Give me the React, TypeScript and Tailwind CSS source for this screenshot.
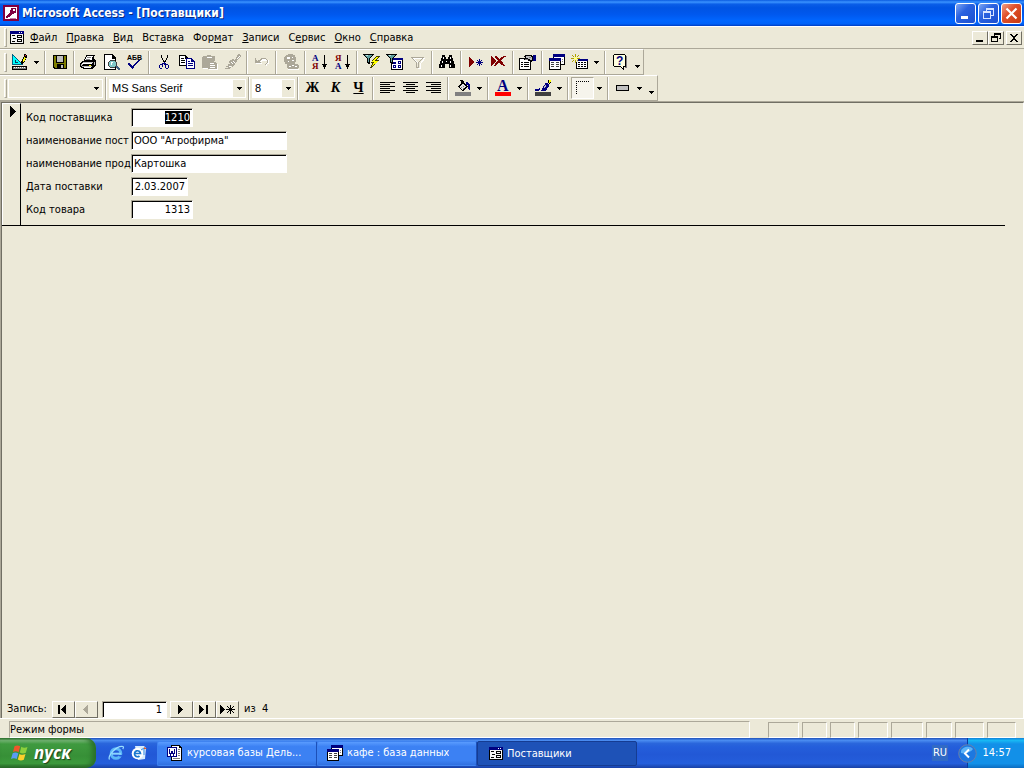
import type { FocusEvent, ReactNode } from "react";

/* ---------- icons ---------- */

function Icon({ children, w = 16, h = 16 }: { children: ReactNode; w?: number; h?: number }) {
  return (
    <svg width={w} height={h} viewBox={`0 0 ${w} ${h}`} shapeRendering="crispEdges" className="shrink-0 overflow-visible" aria-hidden="true">
      {children}
    </svg>
  );
}

const Down = () => (
  <Icon w={5} h={3}>
    <path d="M0 0h5v1H0zM1 1h3v1H1zM2 2h1v1H2z" />
  </Icon>
);

const AccessLogo = () => (
  <Icon>
    <path fill="#800040" d="M0 0h16v16H0z" />
    <path fill="#fff" d="M2 2h12v12H2z" />
    <path fill="#800040" d="M8 3h5v5h-2v1H9v1H8v1H7v1H5v1H3v-2h1v-1h1V9h1V8h1V5h1z" />
    <path fill="#fff" d="M10 4h2v2h-2z" />
    <path fill="#c080a0" d="M7 13h6v1H7z" />
  </Icon>
);

const FormIcon = () => (
  <Icon w={14} h={13}>
    <path d="M0 0h14v13H0z" />
    <path fill="#f4f4f4" d="M1 3h12v9H1z" />
    <path fill="#000080" d="M0 0h14v3H0z" />
    <path fill="#fff" d="M9 1h1v1H9zM11 1h1v1h-1z" />
    <path d="M2 4h3v1H2zM3 7h3v1H3zM2 10h3v1H2z" />
    <path fillRule="evenodd" d="M7 4h5v3H7zM8 5v1h3V5zM7 8h5v3H7zM8 9v1h3V9z" />
  </Icon>
);

const DesignIcon = () => (
  <Icon>
    <path fill="#00ffff" d="M1 1l10 10H1z" />
    <path d="M0 0h1v11H0zM1 1h1v1H1zM2 2h1v1H2zM3 3h1v1H3zM4 4h1v1H4zM5 5h1v1H5zM6 6h1v1H6zM7 7h1v1H7zM8 8h1v1H8zM9 9h1v1H9zM10 10h1v1h-1z" fill="#006080" />
    <path d="M3 6h1v2H3zM3 8h3v1H3z" fill="#004060" />
    <path d="M0 10h11v1H0z" fill="#006080" />
    <path d="M0 12h15v4H0z" />
    <path fill="#808080" d="M1 13h13v2H1z" />
    <path fill="#fff" d="M2 13h1v1H2zM4 13h1v1H4zM6 13h1v1H6zM8 13h1v1H8zM10 13h1v1h-1zM12 13h1v1h-1z" />
    <path d="M12 0h2v1h1v3h-1v2h-1v2h-1v1h-1v1H9V7h1V5h1V3h1z" />
    <path fill="#ffff00" d="M12 3h1v1h1v1h-1v2h-1v1h-1V5h1z" />
    <path fill="#ff4040" d="M13 1h1v1h-1z" />
  </Icon>
);

const SaveIcon = () => (
  <Icon>
    <path d="M1 1h14v14H2v-1H1z" />
    <path fill="#808000" d="M2 2h2v7h8V2h2v12H3v-1H2z" />
    <path fill="#c0c0c0" d="M5 2h6v6H5z" />
    <path d="M5 10h7v4H5z" />
    <path fill="#c0c0c0" d="M9 11h2v3H9z" />
  </Icon>
);

const PrintIcon = () => (
  <Icon w={17} h={16}>
    <path d="M6 1h9v1h-1v3h1v1h1v6h-1v1h-1v1h-1v1H3v-1H1v-1H0V9h1V8h1V7h2V5h1V3h1z" />
    <path fill="#fff" d="M7 2h6v1h-1v3H5V5h1V3h1z" />
    <path fill="#808080" d="M7 3h4v1H7zM6 5h4v1H6z" />
    <path fill="#c0c0c0" d="M3 8h10v1H2v1h11v2h1V8h1v3h-1v1h-1v-2H1v2h11v1H2v-2h1z" />
    <path fill="#fff" d="M2 9h10v1H2zM4 13h7v1H4z" />
    <path fill="#ffff00" d="M9 11h2v1H9z" />
  </Icon>
);

const PreviewIcon = () => (
  <Icon>
    <path d="M0 0h9v1h1v1h1v1h1v13H0z" />
    <path fill="#fff" d="M1 1h7v3h3v11H1z" />
    <path d="M8 1h1v3h3v1H8z" />
    <path d="M6 6h5v1h1v1h1v4h-1v1h-1v1H6v-1H5v-1H4V8h1V7h1z" fill="#404040" />
    <path fill="#80c8c8" d="M6 7h5v1h1v4h-1v1H6v-1H5V8h1z" />
    <path fill="#fff" d="M7 8h2v1H8v2H7z" />
    <path fill="#406080" d="M12 12h2v1h1v1h1v2h-2v-1h-1v-1h-1z" />
  </Icon>
);

const SpellIcon = () => (
  <Icon>
    <text x="0" y="6" fontSize="7" fontWeight="700" className="font-['Liberation_Sans']">АБВ</text>
    <path fill="#000080" d="M1 9h2v1h1v1h1v1h1v-1h1v-1h1V9h1V8h1V7h1V6h2v1h-1v1h-1v1h-1v1H9v1H8v1H7v2H6v1H5v-1H4v-1H3v-1H2v-1H1z" />
  </Icon>
);

const CutIcon = () => (
  <Icon>
    <path d="M5 1h1v3h1v2h1v1h1V6h1V4h1V1h1v3h-1v2h-1v2H9v1H8V8H7V6H6V4H5z" />
    <path fill="#000080" fillRule="evenodd" d="M8 8h1v1h1v1h2v1h1v3h-1v1h-2v-1H9v-3H8v-1H7v3H6v2H4v-1H3v-3h1v-1h2V9h2zM4 11v3h2v-3zM10 11v3h2v-3z" />
  </Icon>
);

const CopyIcon = () => (
  <Icon>
    <path d="M0 1h7v1h1v1h1v9H0z" />
    <path fill="#fff" d="M1 2h5v3h2v6H1z" />
    <path d="M2 4h3v1H2zM2 6h4v1H2zM2 8h4v1H2z" />
    <path fill="#000080" d="M7 4h6v1h1v1h1v1h1v8H7z" />
    <path fill="#fff" d="M8 5h4v3h3v6H8z" />
    <path fill="#000080" d="M9 7h2v1H9zM9 9h5v1H9zM9 11h5v1H9zM12 5h1v2h2v1h-3z" />
  </Icon>
);

const PasteIcon = () => (
  <Icon>
    <path fill="#aca899" d="M1 2h4V1h4v1h4v5h-1v1h2v1h1v6H6v-1H0V3h1z" />
    <path fill="#fff" d="M5 3h5v1H5zM8 9h4v1H8zM8 11h5v1H8zM8 13h5v1H8zM1 14h5v1H1zM15 10h1v6H7v-1h8z" />
  </Icon>
);

const BrushIcon = () => (
  <Icon>
    <path fill="#aca899" d="M13 0h2v1h1v2h-1v1h-1v1h-1v1h-1v2h-1v1h-1v2H9v1H8v1H7v-1H6v2H5v1H0v-1h3v-1H1v-1h2v-2h2V9H4V7h1V6h2V5h2v1h1V5h1V3h1V1h1z" />
    <path fill="#fff" d="M6 8h1v1h1v1H7V9H6zM8 7h1v1h1v1H9V8H8zM12 4h1V3h1V2h1v1h-1v1h-1v1h-1zM4 12h2v1H4z" />
  </Icon>
);

const UndoIcon = () => (
  <Icon>
    <path fill="#fff" d="M8 5h5v1h2v4h-2v2h-1v-2h1V7H8v1H7v1h1v1H2V6h1v1h1v1h2V7h1V6h1z" />
    <path fill="#aca899" d="M7 4h5v1h1v1h1v3h-1v1h-1v1h-1v-1h1V9h1V6h-1V5H8v1H7v1H6v1h1v1H1V4h1v2h1v1h1V6h2V5h1z" />
  </Icon>
);

const LinkIcon = () => (
  <Icon>
    <path fill="#aca899" d="M5 0h5v1h2v2h1v5h-1v2h-1v1H4v-1H2V8H1V3h1V2h1V1h2z" />
    <path fill="#fff" d="M4 3h3v2H4zM9 3h1v1H9zM5 7h1v1H5zM9 6h2v1H9z" />
    <path fill="#aca899" d="M5 10h10v1h1v3h-1v1H5v-1H4v-3h1z" />
    <path fill="#fff" d="M6 12h2v1H6zM12 12h2v1h-2zM9 11h2v1H9zM5 15h11v1H5z" />
  </Icon>
);

function SortIcon({ top, bottom, colors }: { top: string; bottom: string; colors: [string, string] }) {
  return (
    <Icon>
      <text x="0" y="7" fontSize="9" fontWeight="700" fill={colors[0]} className="font-['Liberation_Serif']">{top}</text>
      <text x="0" y="15" fontSize="9" fontWeight="700" fill={colors[1]} className="font-['Liberation_Serif']">{bottom}</text>
      <path d="M12 1h1v9h2v1h-1v2h-1v2h-1v-2h-1v-2h-1v-1h2z" />
    </Icon>
  );
}

const Funnel = () => (
  <>
    <path d="M0 0h11v1h-1v1H9v1H8v1H7v6H5V9H4V4H3V3H2V2H1V1H0z" />
    <path fill="#5f9f9f" d="M2 1h7v1H8v1H7v1H6v4H5V4H4V3H3V2H2z" />
    <path fill="#c0e0e0" d="M3 1h2v1H3z" />
  </>
);

const FilterSelection = () => (
  <Icon w={17} h={16}>
    <Funnel />
    <path fill="#404000" d="M13 2h4v1h-1v1h-1v1h-1v1h2v1h-1v1h-1v1h-1v1h-1v1h-1v1h-1v1H9v1H7v-1h1v-2h1V9h-1V8h1V6h1V5h1V4h1V3h1z" />
    <path fill="#ffff00" d="M13 3h2v1h-1v1h-1v1h-1v1h3v1h-1v1h-1v1h-2v1h-1v1H9v-1h1V9h1V8H9V7h1V6h1V5h1V4h1z" />
  </Icon>
);

const FilterForm = () => (
  <Icon w={17} h={16}>
    <path d="M5 4h12v12H5z" />
    <path fill="#fff" d="M6 6h10v9H6z" />
    <path fill="#000080" d="M5 4h12v2H5z" />
    <path fill="#000080" fillRule="evenodd" d="M7 8h3v2H7zM7 11h3v3H7zM8 12v1h1v-1zM12 7h3v3h-3zM13 8v1h1V8zM12 11h3v3h-3zM13 12v1h1v-1z" />
    <Funnel />
  </Icon>
);

const FilterOff = () => (
  <Icon>
    <path fill="none" stroke="#fff" d="M2.500 4.500h12l-4 5v5h-2v-5l-5-5" />
    <path fill="none" stroke="#aca899" d="M1.500 3.500h12l-5 5v5h-2v-5z" />
  </Icon>
);

const FindIcon = () => (
  <Icon>
    <path d="M3 1h3v2h1v2h2V3h1V1h3v3h1v3h1v3h1v4h-6v-4H6v4H0v-4h1V7h1V4h1z" />
    <path fill="#fff" d="M4 3h1v2H4zM3 7h1v2H3zM2 11h1v2H2zM11 3h1v2h-1zM11 7h1v2h-1zM11 11h1v2h-1zM7 7h1v1H7z" />
  </Icon>
);

const NewRecord = () => (
  <Icon>
    <path fill="#800000" d="M1 3h1v1h1v1h1v1h1v1h1v2H5v1H4v1H3v1H2v1H1z" />
    <path fill="#000080" d="M11 5h1v2h1V6h1v1h-1v1h2v1h-2v1h1v1h-1v-1h-1v2h-1v-2h-1v1H9v-1h1V9H8V8h2V7H9V6h1v1h1z" />
  </Icon>
);

const DeleteRecord = () => (
  <Icon>
    <path fill="#800000" d="M0 2h1v1h1v1h1v1h1v1h1v2H4v1H3v1H2v1H1v1H0z" />
    <path fill="#800000" d="M4 2h2v1h1v1h1v1h1V4h1V3h2V2h3v1h-2v1h-1v1h-1v1h-1v1h1v1h1v2h1v1h1v1h-2v-1h-2v-1H9V9H7v1H6v1H5v1H3v-1h1V9h1V8h1V7h1V6H6V5H5V4H4z" />
  </Icon>
);

const PropertiesIcon = () => (
  <Icon w={17} h={16}>
    <path d="M0 4h12v12H0z" />
    <path fill="#fff" d="M1 5h10v10H1z" />
    <path d="M2 8h2v1H2zM5 8h5v1H5zM2 10h2v1H2zM5 10h5v1H5zM2 12h2v1H2zM5 12h5v1H5z" />
    <path d="M6 1h7v1h2v5h-2v1h-2V7H9V6H5V5H4V4h2V3H5V2h1z" />
    <path fill="#c0c0c0" d="M7 2h5v1h1v3h-2V5H9V4H7z" />
    <path fill="#808080" d="M6 5h3v1H6zM10 3h2v1h-2z" />
    <path fill="#000080" d="M14 1h3v6h-3z" />
  </Icon>
);

const DbWindow = () => (
  <Icon>
    <path d="M4 0h12v11H4z" />
    <path fill="#fff" d="M5 3h10v7H5z" />
    <path fill="#000080" d="M4 0h12v3H4z" />
    <path fill="#808080" d="M13 5h1v1h-1zM13 7h1v1h-1z" />
    <path d="M0 4h12v12H0z" />
    <path fill="#fff" d="M1 7h10v8H1z" />
    <path fill="#000080" d="M0 4h12v3H0z" />
    <path fill="#404040" d="M2 8h3v1H2zM7 8h3v1H7zM2 10h3v1H2zM7 10h3v1H7zM2 12h3v1H2zM7 12h3v1H7z" />
  </Icon>
);

const NewObject = () => (
  <Icon w={17} h={16}>
    <path d="M5 5h12v10H5z" />
    <path fill="#fff" d="M6 7h10v7H6z" />
    <path fill="#000080" d="M5 5h12v2H5z" />
    <path d="M7 8h2v1H7zM10 8h2v1h-2zM13 8h2v1h-2zM7 10h2v1H7zM10 10h2v1h-2zM13 10h2v1h-2zM7 12h2v1H7zM10 12h2v1h-2zM13 12h2v1h-2z" />
    <path fill="#ece9d8" d="M3 3h4v5H3z" />
    <path fill="#b0a000" d="M4 0h1v3H4zM4 6h1v3H4zM0 4h3v1H0zM6 4h3v1H6zM1 1h1v1H1zM2 2h1v1H2zM7 1h1v1H7zM6 2h1v1H6zM2 6h1v1H2zM1 7h1v1H1zM6 6h1v1H6z" />
    <path fill="#ffff80" d="M3 3h3v3H3z" />
  </Icon>
);

const HelpIcon = () => (
  <Icon>
    <path d="M2 0h11v1h1v12h-2v3h-1v-1h-1v-1H9v-1H2v-1H1V1h1z" />
    <path fill="#ffffe0" d="M2 1h11v11h-2v2h-1v-1H9v-1H2z" />
    <text x="4" y="11" fontSize="12" fontWeight="700" fill="#000080" className="font-['Liberation_Sans']">?</text>
    <path fill="#808080" d="M14 2h1v12h-2v-1h1z" />
  </Icon>
);

const FillIcon = () => (
  <Icon>
    <path d="M5 0h3v1h1v2h1v1h1v1h1v1h1v1h-1v1h-1v1h-1v1H9v1H7v-1H6V9H5V8H4V7H3V6h1V5h1V4h1V1H5z" />
    <path fill="#e4e4e4" d="M7 4h2v1h1v1h1v1h-1v1H9v1H8v1H7V9H6V8H5V6h1V5h1z" />
    <path fill="#808080" d="M6 7h1v1H6zM8 6h1v1H8zM8 8h1v1H8z" />
    <path fill="#000080" d="M11 2h2v1h1v1h1v6h-1V9h-1V5h-2z" />
    <path fill="#808080" d="M0 12h16v4H0z" />
  </Icon>
);

const FontColor = () => (
  <Icon>
    <text x="2" y="11" fontSize="16" fontWeight="700" fill="#000080" className="font-['Liberation_Serif']">A</text>
    <path fill="#ff0000" d="M0 12h16v4H0z" />
  </Icon>
);

const LineColor = () => (
  <Icon>
    <path fill="#000080" d="M10 3h3v1h1v3h-1v1h-1v2h-1v1H6v-1h1V8h1V6h1V5h1zM0 9h4V8h1v2H4v1H0z" />
    <path d="M13 0h3v3h-1v1h-1V3h-1z" />
    <path fill="#ffff00" d="M14 0h2v2h-1v1h-1z" />
    <path fill="#c0c0c0" d="M10 5h1v2h-1v1H9V6h1z" />
    <path fill="#404040" d="M0 12h16v4H0z" />
  </Icon>
);

const BorderDots = () => (
  <Icon>
    <path stroke="#000" strokeDasharray="1 1" fill="none" d="M1 1.500H15M1.500 1V15" />
  </Icon>
);

const LineStyle = () => (
  <Icon w={13} h={6}>
    <path d="M0 0h13v6H0z" />
    <path fill="#c0c0c0" d="M1 1h11v4H1z" />
  </Icon>
);

const Align = ({ d }: { d: string }) => (
  <Icon w={15} h={12}>
    <path d={d} />
  </Icon>
);

const WordIcon = () => (
  <Icon>
    <path d="M4 0h9v1h1v1h1v14H4z" />
    <path fill="#fff" d="M5 1h7v2h2v12H5z" />
    <path fill="#808080" d="M6 13h7v1H6zM11 4h2v1h-2zM11 6h2v1h-2zM11 8h2v1h-2zM11 10h2v1h-2z" />
    <path fill="#000080" d="M0 2h10v10H0z" />
    <path fill="#fff" d="M1 3h8v8H1z" />
    <path fill="none" stroke="#000080" d="M2.500 4v3l1 3 1.500-4 1.500 4 1-3V4" />
  </Icon>
);

const IeIcon = () => (
  <svg width="16" height="16" viewBox="0 0 16 16" fill="none" aria-hidden="true">
    <circle cx="8" cy="8.500" r="4.800" stroke="#5cb8f8" strokeWidth="3" />
    <path d="M4 8.700h9" stroke="#8ad4ff" strokeWidth="2" />
    <path d="M10.500 9.900h4.500v1.600h-3.500z" fill="#225bd9" />
    <path d="M1.500 14.500C-.5 11 8 .5 15 1.500c.8.500.3 1.800-.3 2.500" stroke="#9adfff" strokeWidth="1.200" />
  </svg>
);

const OutlookIcon = () => (
  <svg width="16" height="16" viewBox="0 0 16 16" aria-hidden="true">
    <path d="M4 1h9l2 2-1 11-7 1z" fill="#d8ecfc" />
    <circle cx="6.500" cy="8.500" r="5.800" fill="#fff" />
    <path d="M3.500 8.500h6a3 3 0 1 0-1 2.500" fill="none" stroke="#1c78d0" strokeWidth="1.700" />
    <path d="M10 5l3-2v7" fill="none" stroke="#3c8ee0" />
    <path d="M13 2l3 2h-3z" fill="#e05020" />
  </svg>
);

const WindowsFlag = () => (
  <svg width="19" height="18" viewBox="0 0 19 18" aria-hidden="true">
    <path fill="#f0562b" d="M3.500 2.200C5.500 1 7.500 1.200 9.200 2.300L7.600 8.200C5.800 7.100 4 7 2 8z" />
    <path fill="#8cd03c" d="M10.300 2.800c2 1.100 4 1.200 6.200.2l-1.700 5.800c-2.200 1-4.200.9-6-.2z" />
    <path fill="#5a9cf5" d="M1.700 9.200c2-1 3.800-.9 5.600.2l-1.600 5.700C4 14 2 13.900 0 15z" />
    <path fill="#fbd02c" d="M8.400 9.900c2 1.100 4 1.200 6.100.2l-1.700 5.700c-2.100 1-4.100.9-6-.2z" />
  </svg>
);

/* ---------- small building blocks ---------- */

const Grip = () => <span className="mr-px ml-1 h-[19px] w-[3px] shrink-0 border border-t-white border-r-[#aca899] border-b-[#aca899] border-l-white" />;

const Sep = () => <span className="mx-[2px] h-[23px] w-[2px] shrink-0 border-r border-l border-r-white border-l-[#aca899]" />;

function Tool({ label, children, pressed }: { label: string; children: ReactNode; pressed?: boolean }) {
  return (
    <button
      type="button"
      aria-label={label}
      className={
        "flex h-[22px] w-[23px] shrink-0 items-center justify-center " +
        (pressed ? "border border-t-[#aca899] border-r-white border-b-white border-l-[#aca899] bg-[#f6f4ec]" : "")
      }
    >
      {children}
    </button>
  );
}

function Arrow({ label }: { label: string }) {
  return (
    <button type="button" aria-label={label} className="flex h-[22px] w-[11px] shrink-0 items-center justify-center">
      <Down />
    </button>
  );
}

function More() {
  return (
    <button type="button" aria-label="Другие кнопки" className="flex h-[22px] w-3 shrink-0 items-end justify-center pb-[5px]">
      <Down />
    </button>
  );
}

function Combo({ label, value, className }: { label: string; value: string; className: string }) {
  return (
    <span className={"relative flex h-[19px] shrink-0 items-center border border-white " + className}>
      <select aria-label={label} defaultValue={value} className="h-full w-full appearance-none bg-transparent pl-[2px] font-['Liberation_Sans',sans-serif] text-[11px] outline-none">
        <option>{value}</option>
      </select>
      <span className="pointer-events-none absolute inset-y-0 right-0 flex w-3 items-center justify-center bg-[#ece9d8]">
        <Down />
      </span>
    </span>
  );
}

const toolbarClass = "flex h-[26px] w-fit items-center border-t border-r border-b border-t-white border-r-[#aca899] border-b-[#aca899]";

const fieldClass = "border border-t-[#aca899] border-r-white border-b-white border-l-[#aca899] bg-white shadow-[inset_1px_1px_0_#000] outline-none";

/* ---------- data ---------- */

const menu = [
  ["", "Ф", "айл"],
  ["", "П", "равка"],
  ["", "В", "ид"],
  ["Вст", "а", "вка"],
  ["Фор", "м", "ат"],
  ["", "З", "аписи"],
  ["С", "е", "рвис"],
  ["", "О", "кно"],
  ["", "С", "правка"],
];

const fields = [
  { id: "supplier", label: "Код поставщика", value: "1210", className: "w-[62px] text-right" },
  { id: "supplierName", label: "наименование пост", value: 'ООО "Агрофирма"', className: "w-[156px]" },
  { id: "productName", label: "наименование прод", value: "Картошка", className: "w-[156px]" },
  { id: "date", label: "Дата поставки", value: "12.03.2007", className: "w-[57px] [direction:rtl]" },
  { id: "product", label: "Код товара", value: "1313", className: "w-[62px] text-right" },
];

const statusPanels = ["w-[31px]", "w-[25px]", "w-[25px]", "w-[30px]", "w-[32px]", "w-[26px]", "w-[29px]", "w-[29px]"];

/* ---------- window parts ---------- */

function TitleBar() {
  const box = "flex h-[21px] w-[21px] items-center justify-center rounded-[3px] border border-white";
  return (
    <header className="flex h-[26px] items-center bg-[linear-gradient(#0a5be0,#3a93ff_8%,#0a5ee8_16%,#0054e3_30%,#0058ee_55%,#0066ff_80%,#0062f8_92%,#003cc0)] pr-[2px] pl-[3px]">
      <AccessLogo />
      <h1 className="ml-[3px] flex-1 truncate font-['DejaVu_Sans_Condensed','DejaVu_Sans',sans-serif] text-[12px] font-bold text-white [text-shadow:1px_1px_0_#0a2a80]">
        Microsoft Access - [Поставщики]
      </h1>
      <div className="flex gap-[2px]">
        <button type="button" aria-label="Свернуть" className={box + " bg-[linear-gradient(135deg,#7ea6f4,#2a62e0_40%,#1c4fd0)]"}>
          <Icon w={13} h={13}><path fill="#fff" d="M2 9h7v3H2z" /></Icon>
        </button>
        <button type="button" aria-label="Свернуть в окно" className={box + " bg-[linear-gradient(135deg,#7ea6f4,#2a62e0_40%,#1c4fd0)]"}>
          <Icon w={13} h={13}><path fill="#d8e4ff" fillRule="evenodd" d="M4 1h8v8H9V8h2V3H5v1H4zM1 4h8v8H1zM2 6v5h6V6z" /></Icon>
        </button>
        <button type="button" aria-label="Закрыть" className={box + " bg-[linear-gradient(135deg,#f0a088,#e0502c_40%,#c83a10)]"}>
          <svg width="13" height="13" viewBox="0 0 13 13" aria-hidden="true"><path stroke="#fff" strokeWidth="2.200" d="M1.500 1.500l10 10M11.500 1.500l-10 10" /></svg>
        </button>
      </div>
    </header>
  );
}

function MenuBar() {
  const box = "flex h-[14px] w-4 items-center justify-center border border-t-white border-r-[#716f64] border-b-[#716f64] border-l-white";
  return (
    <nav className="flex h-[23px] items-center border-t border-b border-t-white border-b-[#aca899]">
      <Grip />
      <span className="ml-[2px] flex"><FormIcon /></span>
      <div className="ml-[6px] flex flex-1 gap-[9px] pt-px">
        {menu.map(([before, key, after]) => (
          <button key={before + key + after} type="button">
            {before}<u>{key}</u>{after}
          </button>
        ))}
      </div>
      <div className="mr-[2px] flex">
        <button type="button" aria-label="Свернуть форму" className={box}>
          <Icon w={10} h={9}><path d="M1 7h7v2H1z" /></Icon>
        </button>
        <button type="button" aria-label="Восстановить форму" className={box}>
          <Icon w={10} h={9}><path fillRule="evenodd" d="M3 0h7v6H8V5h1V2H4v1H3zM0 3h7v6H0zM1 5v3h5V5z" /></Icon>
        </button>
        <button type="button" aria-label="Закрыть форму" className={box + " ml-[2px]"}>
          <Icon w={8} h={8}><path d="M0 0h2v1h1v1h2V1h1V0h2v1H7v1H6v1H5v2h1v1h1v1h1v1H6V7H5V6H3v1H2v1H0V7h1V6h1V5h1V3H2V2H1V1H0z" /></Icon>
        </button>
      </div>
    </nav>
  );
}

function StandardToolbar() {
  return (
    <div role="toolbar" aria-label="Стандартная" className={toolbarClass}>
      <Grip />
      <Tool label="Вид"><DesignIcon /></Tool>
      <Arrow label="Выбрать вид" />
      <Sep />
      <Tool label="Сохранить"><SaveIcon /></Tool>
      <Sep />
      <Tool label="Печать"><PrintIcon /></Tool>
      <Tool label="Просмотр"><PreviewIcon /></Tool>
      <Tool label="Орфография"><SpellIcon /></Tool>
      <Sep />
      <Tool label="Вырезать"><CutIcon /></Tool>
      <Tool label="Копировать"><CopyIcon /></Tool>
      <Tool label="Вставить"><PasteIcon /></Tool>
      <Tool label="Формат по образцу"><BrushIcon /></Tool>
      <Sep />
      <Tool label="Отменить"><UndoIcon /></Tool>
      <Sep />
      <Tool label="Гиперссылка"><LinkIcon /></Tool>
      <Sep />
      <Tool label="По возрастанию"><SortIcon top="А" bottom="Я" colors={["#000080", "#800000"]} /></Tool>
      <Tool label="По убыванию"><SortIcon top="Я" bottom="А" colors={["#800000", "#000080"]} /></Tool>
      <Sep />
      <Tool label="Фильтр по выделенному"><FilterSelection /></Tool>
      <Tool label="Изменить фильтр"><FilterForm /></Tool>
      <Tool label="Применить фильтр"><FilterOff /></Tool>
      <Sep />
      <Tool label="Найти"><FindIcon /></Tool>
      <Sep />
      <Tool label="Новая запись"><NewRecord /></Tool>
      <Tool label="Удалить запись"><DeleteRecord /></Tool>
      <Sep />
      <Tool label="Свойства"><PropertiesIcon /></Tool>
      <Sep />
      <Tool label="Окно базы данных"><DbWindow /></Tool>
      <Tool label="Новый объект"><NewObject /></Tool>
      <Arrow label="Выбрать объект" />
      <Sep />
      <Tool label="Справка"><HelpIcon /></Tool>
      <More />
    </div>
  );
}

function FormatToolbar() {
  return (
    <div role="toolbar" aria-label="Форматирование" className={toolbarClass}>
      <Grip />
      <Combo label="Объект" value="" className="w-[95px]" />
      <Sep />
      <Combo label="Шрифт" value="MS Sans Serif" className="w-[137px] bg-white" />
      <Sep />
      <Combo label="Размер" value="8" className="w-[43px] bg-white" />
      <Sep />
      <Tool label="Полужирный"><b className="font-['Liberation_Serif',serif] text-[14px]">Ж</b></Tool>
      <Tool label="Курсив"><b className="font-['Liberation_Serif',serif] text-[14px] italic">К</b></Tool>
      <Tool label="Подчеркнутый"><b className="font-['Liberation_Serif',serif] text-[14px] underline">Ч</b></Tool>
      <Sep />
      <Tool label="По левому краю"><Align d="M0 0h15v1H0zM0 2h10v1H0zM0 4h15v1H0zM0 6h10v1H0zM0 8h15v1H0zM0 10h10v1H0z" /></Tool>
      <Tool label="По центру"><Align d="M0 0h15v1H0zM3 2h9v1H3zM0 4h15v1H0zM3 6h9v1H3zM0 8h15v1H0zM3 10h9v1H3z" /></Tool>
      <Tool label="По правому краю"><Align d="M0 0h15v1H0zM5 2h10v1H5zM0 4h15v1H0zM5 6h10v1H5zM0 8h15v1H0zM5 10h10v1H5z" /></Tool>
      <Sep />
      <Tool label="Цвет заливки"><FillIcon /></Tool>
      <Arrow label="Выбрать цвет заливки" />
      <Sep />
      <Tool label="Цвет текста"><FontColor /></Tool>
      <Arrow label="Выбрать цвет текста" />
      <Sep />
      <Tool label="Цвет линии"><LineColor /></Tool>
      <Arrow label="Выбрать цвет линии" />
      <Sep />
      <Tool label="Толщина линии" pressed><BorderDots /></Tool>
      <Arrow label="Выбрать толщину" />
      <Sep />
      <Tool label="Оформление"><LineStyle /></Tool>
      <Arrow label="Выбрать оформление" />
      <More />
    </div>
  );
}

function RecordForm() {
  const selectAll = (e: FocusEvent<HTMLInputElement>) => e.currentTarget.select();
  return (
    <form className="mr-[18px] flex border-b border-black">
      <div className="w-[19px] shrink-0 border-t border-r border-l border-t-white border-r-black border-l-white pt-[2px] pl-[7px]">
        <Icon w={6} h={11}><path d="M0 0h1v1h1v1h1v1h1v1h1v1h1v1H5v1H4v1H3v1H2v1H1v1H0z" /></Icon>
      </div>
      <div className="flex flex-col gap-1 pt-[5px] pb-[6px] pl-[5px]">
        {fields.map((f, i) => (
          <div key={f.id} className="flex h-[19px] items-center">
            <label htmlFor={f.id} className="w-[105px] overflow-hidden whitespace-nowrap">{f.label}</label>
            <input
              id={f.id}
              defaultValue={f.value}
              autoFocus={i === 0}
              onFocus={selectAll}
              className={"h-[19px] px-[2px] pb-px selection:bg-black selection:text-white " + fieldClass + " " + f.className}
            />
          </div>
        ))}
      </div>
    </form>
  );
}

function NavButton({ label, d, off }: { label: string; d: string; off?: boolean }) {
  return (
    <button
      type="button"
      aria-label={label}
      disabled={off}
      className="flex h-[17px] w-[23px] items-center justify-center border border-t-white border-r-[#716f64] border-b-[#716f64] border-l-white"
    >
      <Icon w={17} h={9}><path fill={off ? "#aca899" : "#000"} d={d} /></Icon>
    </button>
  );
}

function RecordNavigator() {
  return (
    <div className="flex h-[18px] items-center pl-[5px]">
      <label htmlFor="record" className="w-[45px]">Запись:</label>
      <NavButton label="Первая запись" d="M3 0h2v9H3zM11 0v9h-1V8H9V7H8V6H7V5H6V4h1V3h1V2h1V1h1V0z" />
      <NavButton label="Предыдущая запись" off d="M10 0v9H9V8H8V7H7V6H6V5H5V4h1V3h1V2h1V1h1V0z" />
      <input id="record" defaultValue="1" className={"mr-[3px] ml-1 h-[17px] w-[65px] px-[4px] text-right " + fieldClass} />
      <NavButton label="Следующая запись" d="M5 0h1v1h1v1h1v1h1v1h1v1H9v1H8v1H7v1H6v1H5z" />
      <NavButton label="Последняя запись" d="M3 0h1v1h1v1h1v1h1v1h1v1H7v1H6v1H5v1H4v1H3zM10 0h2v9h-2z" />
      <NavButton label="Новая запись" d="M1 0h1v1h1v1h1v1h1v1h1v1H5v1H4v1H3v1H2v1H1zM11 0h1v3h1V2h1V1h1v1h-1v1h-1v1h3v1h-3v1h1v1h1v1h-1V7h-1V6h-1v3h-1V6h-1v1H9v1H8V7h1V6h1V5H7V4h3V3H9V2H8V1h1v1h1v1h1z" />
      <span className="ml-[5px] whitespace-pre">из  4</span>
    </div>
  );
}

function StatusBar() {
  const sunken = "border border-t-[#aca899] border-r-white border-b-white border-l-[#aca899]";
  return (
    <div className="flex h-5 items-end border-t border-white pr-2 pl-[9px]">
      <p className={"h-[17px] flex-1 leading-[15px] " + sunken}>Режим формы</p>
      <div className="ml-[18px] flex gap-[3px]">
        {statusPanels.map((w, i) => (
          <span key={i} className={"h-4 " + w + " " + sunken} />
        ))}
      </div>
    </div>
  );
}

function TaskButton({ icon, children, active }: { icon: ReactNode; children: ReactNode; active?: boolean }) {
  return (
    <button
      type="button"
      className={
        "flex h-[25px] w-[160px] items-center gap-1 rounded-[2px] border text-white " +
        (active
          ? "border-[#153c92] bg-[#1e52b7] pt-px pl-[11px]"
          : "border-[#3f83f0] border-r-[#1c4fb8] bg-[linear-gradient(#5a9cff,#3c81f3_20%,#3c81f3_80%,#3070e0)] pl-[9px]")
      }
    >
      {icon}
      <span className="truncate">{children}</span>
    </button>
  );
}

function Taskbar() {
  return (
    <footer className="flex h-[30px] items-center bg-[linear-gradient(#1f50b8,#4a8cf0_8%,#2a66dc_18%,#245edb_30%,#2258d6_55%,#245edb_85%,#1941a5)] text-white">
      <button
        type="button"
        className="flex h-full w-24 items-center gap-[4px] rounded-r-[10px] bg-[linear-gradient(#2f6f2f,#78b878_8%,#3f9a3f_20%,#379037_60%,#3c9a3c_85%,#256025)] pl-[11px] font-['Open_Sans',sans-serif] text-[17px] font-bold italic shadow-[inset_-4px_0_5px_#2a702a] [text-shadow:1px_1px_1px_#1a401a]"
      >
        <WindowsFlag />
        пуск
      </button>
      <div className="ml-3 flex gap-[7px]">
        <button type="button" aria-label="Internet Explorer"><IeIcon /></button>
        <button type="button" aria-label="Outlook Express"><OutlookIcon /></button>
      </div>
      <div className="ml-[10px] flex flex-1">
        <TaskButton icon={<WordIcon />}>курсовая базы Дель...</TaskButton>
        <TaskButton icon={<DbWindow />}>кафе : база данных</TaskButton>
        <TaskButton icon={<FormIcon />} active>Поставщики</TaskButton>
      </div>
      <span className="mr-[19px] bg-[#316ac5] px-px py-[1px]">RU</span>
      <div className="relative flex h-full w-[57px] items-center justify-end border-l border-[#0e3a9c] bg-[linear-gradient(#1080d8,#18b8f4_8%,#1290e8_20%,#1290e8_85%,#0c6cc0)] pr-[13px]">
        <button type="button" aria-label="Показать скрытые значки" className="absolute top-[6px] -left-[10px]">
          <svg width="19" height="19" viewBox="0 0 19 19" aria-hidden="true">
            <circle cx="9.500" cy="9.500" r="8.800" fill="#1c78e0" stroke="#6a7fa8" />
            <path d="M3 6.500a7.500 7.500 0 0 1 12-1.500c-2 3-7 5-12 4z" fill="#5cb4f8" />
            <path d="M11 5.500l-4 4 4 4" fill="none" stroke="#fff" strokeWidth="2" />
          </svg>
        </button>
        <time>14:57</time>
      </div>
    </footer>
  );
}

export default function App() {
  return (
    <div className="flex min-h-screen flex-col overflow-hidden bg-[#ece9d8] font-['DejaVu_Sans_Condensed','DejaVu_Sans',sans-serif] text-[11px] leading-[14px] text-black">
      <TitleBar />
      <MenuBar />
      <StandardToolbar />
      <FormatToolbar />
      <main className="flex flex-1 flex-col border-t border-l border-[#aca899]">
        <div className="flex flex-1 flex-col border-t border-r border-l border-t-[#716f64] border-r-white border-l-[#716f64]">
          <RecordForm />
          <div className="flex-1" />
          <RecordNavigator />
        </div>
      </main>
      <StatusBar />
      <Taskbar />
    </div>
  );
}
